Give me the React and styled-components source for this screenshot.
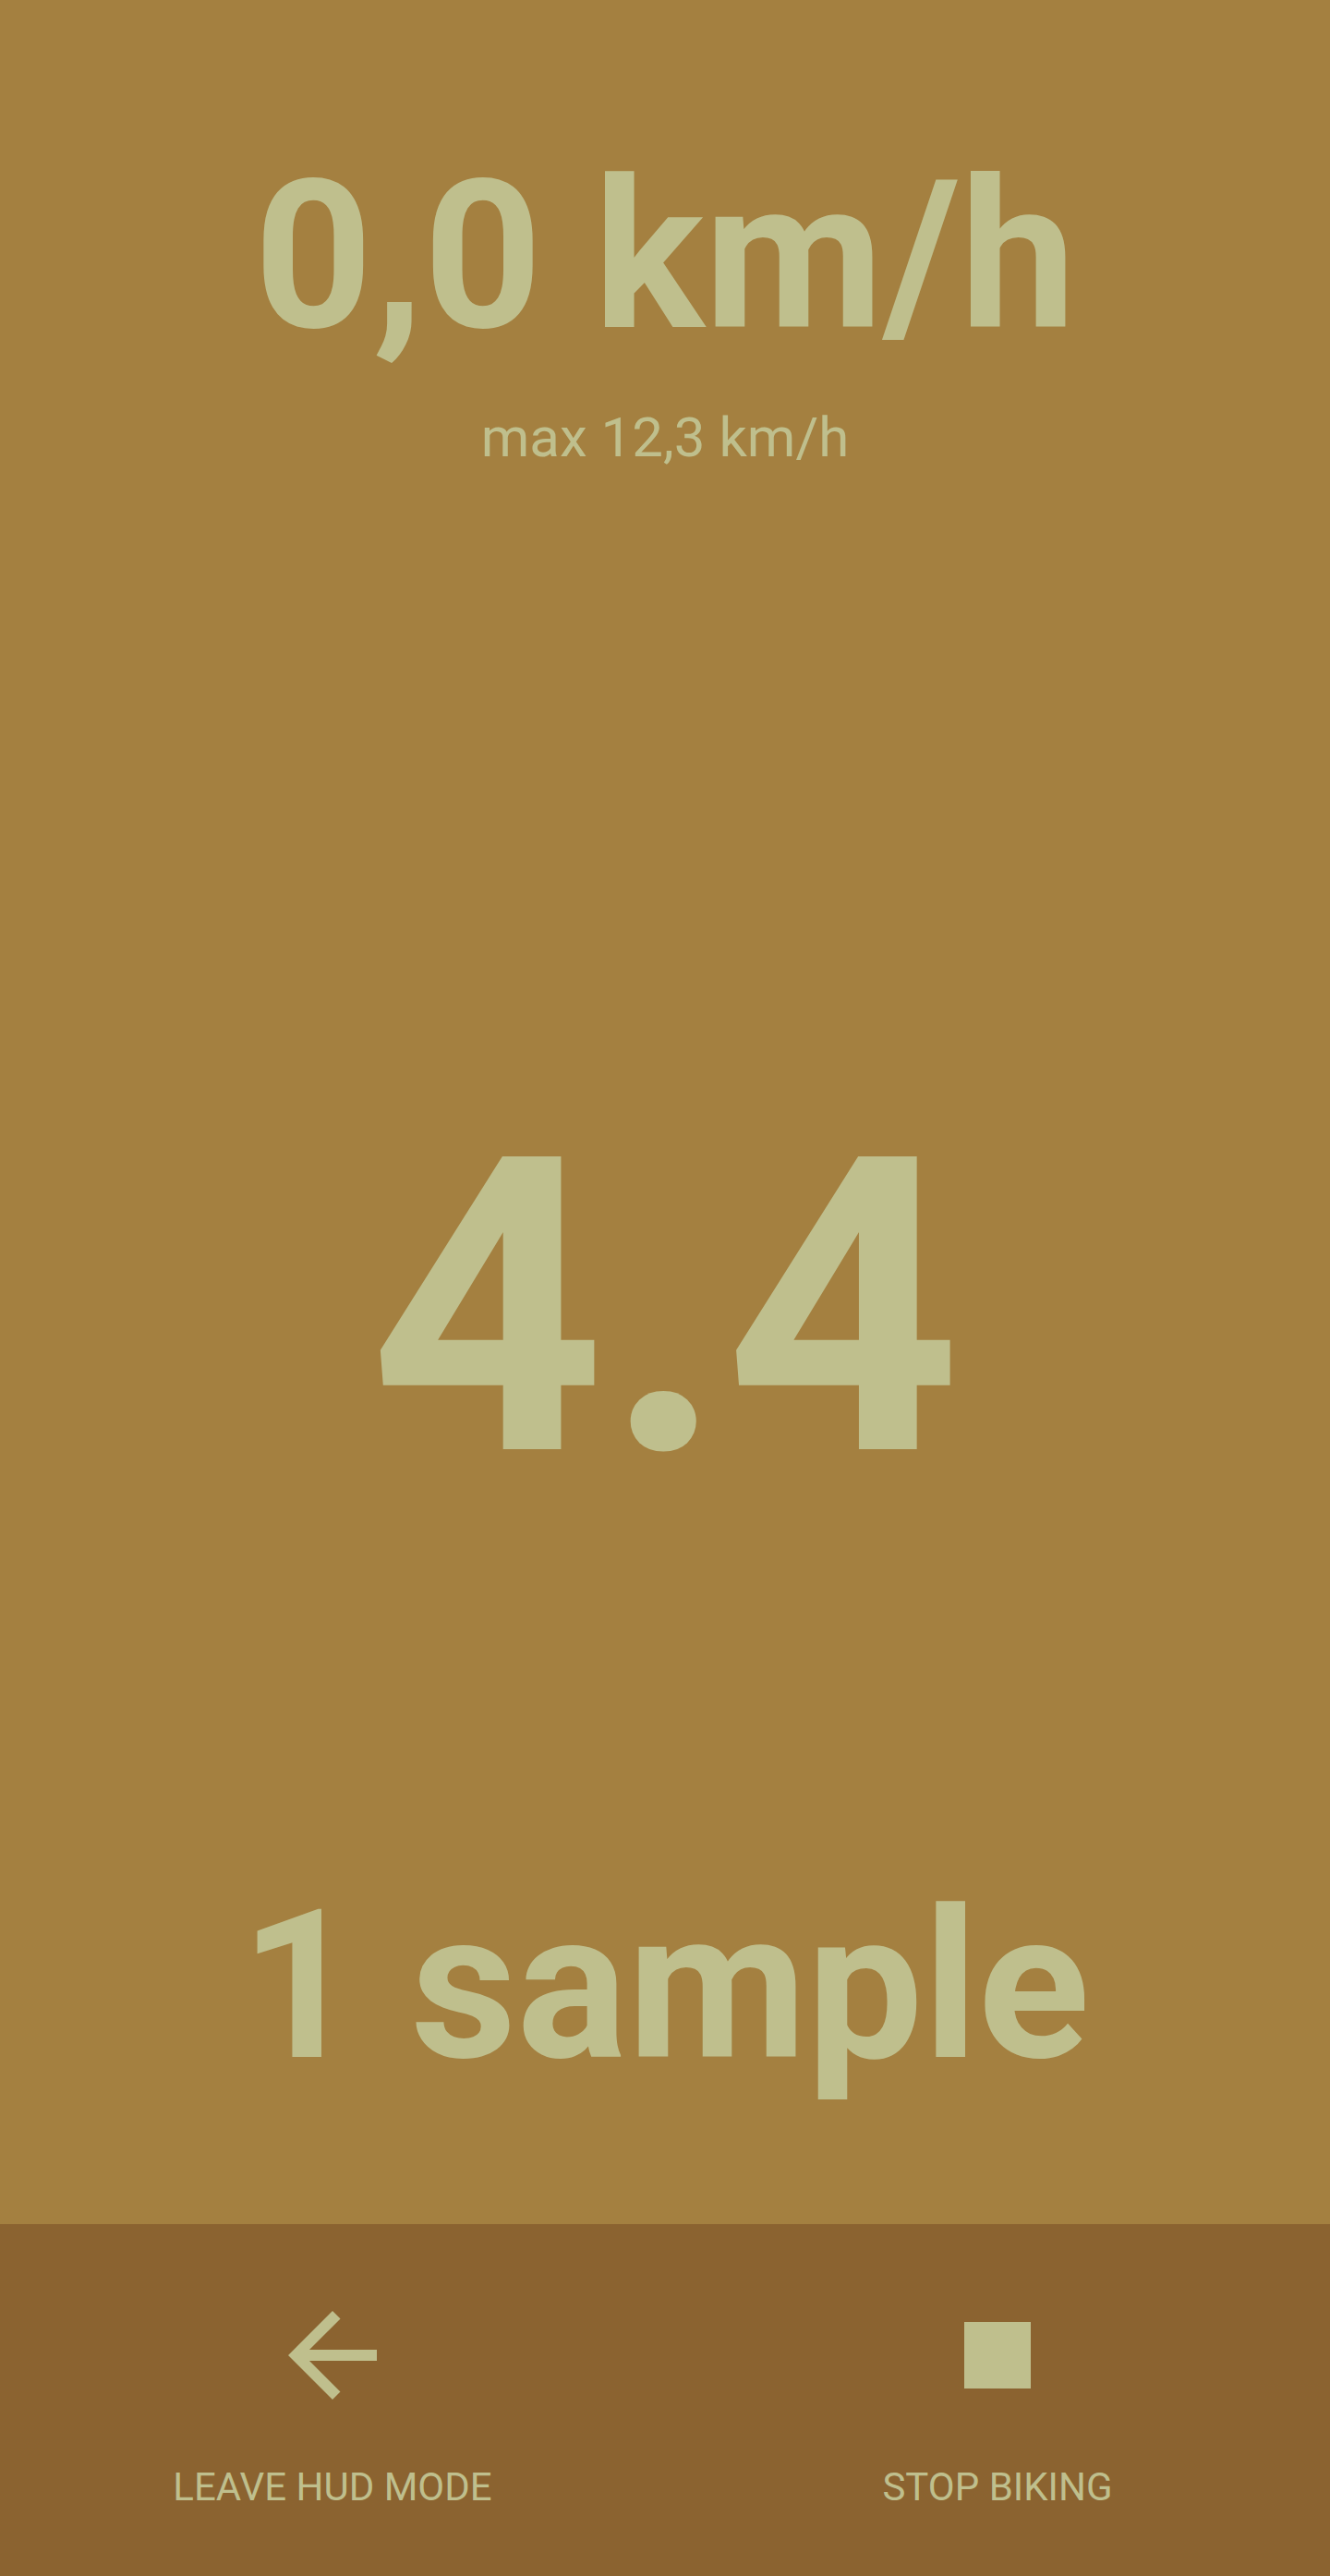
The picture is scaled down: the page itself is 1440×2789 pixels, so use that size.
import React from "react";
import styled, { createGlobalStyle } from "styled-components";

const GlobalStyle = createGlobalStyle`
  html, body {
    margin: 0;
    padding: 0;
  }
  body {
    font-family: Roboto, "Noto Sans", sans-serif;
    background: #a48040;
  }
`;

const Screen = styled.div`
  display: flex;
  flex-direction: column;
  min-height: 100vh;
  background: #a48040;
  color: #bfbf8d;
`;

const Hud = styled.main`
  flex: 1;
  display: flex;
  flex-direction: column;
  align-items: center;
  padding-top: 166px;
`;

const Speed = styled.div`
  font-size: 224px;
  font-weight: 700;
  line-height: 1;
  white-space: nowrap;
`;

const MaxSpeed = styled.div`
  margin-top: 54px;
  font-size: 60px;
  font-weight: 400;
  line-height: 1;
`;

const Value = styled.div`
  margin-top: 690px;
  font-size: 446px;
  font-weight: 700;
  line-height: 1;
`;

const Samples = styled.div`
  margin-top: 399px;
  font-size: 224px;
  font-weight: 700;
  line-height: 1;
`;

const BottomBar = styled.nav`
  height: 381px;
  background: #8b6330;
  display: grid;
  grid-template-columns: 1fr 1fr;
`;

const Action = styled.button`
  all: unset;
  display: flex;
  flex-direction: column;
  align-items: center;
  padding-top: 70px;
  color: #bfbf8d;
  cursor: pointer;
  svg {
    display: block;
    width: 144px;
    height: 144px;
  }
`;

const Label = styled.span`
  margin-top: 50px;
  font-family: Roboto, sans-serif;
  font-size: 42px;
  line-height: 1;
  text-transform: uppercase;
`;

const BackIcon = () => (
  <svg viewBox="0 0 24 24" fill="currentColor">
    <path d="M20 11H7.83l5.59-5.59L12 4l-8 8 8 8 1.41-1.41L7.83 13H20v-2z" />
  </svg>
);

const StopIcon = () => (
  <svg viewBox="0 0 24 24" fill="currentColor">
    <path d="M6 6h12v12H6z" />
  </svg>
);

export default function App() {
  return (
    <>
      <GlobalStyle />
      <Screen>
        <Hud>
          <Speed>0,0 km/h</Speed>
          <MaxSpeed>max 12,3 km/h</MaxSpeed>
          <Value>4.4</Value>
          <Samples>1 sample</Samples>
        </Hud>
        <BottomBar>
          <Action>
            <BackIcon />
            <Label>Leave HUD mode</Label>
          </Action>
          <Action>
            <StopIcon />
            <Label>Stop biking</Label>
          </Action>
        </BottomBar>
      </Screen>
    </>
  );
}
